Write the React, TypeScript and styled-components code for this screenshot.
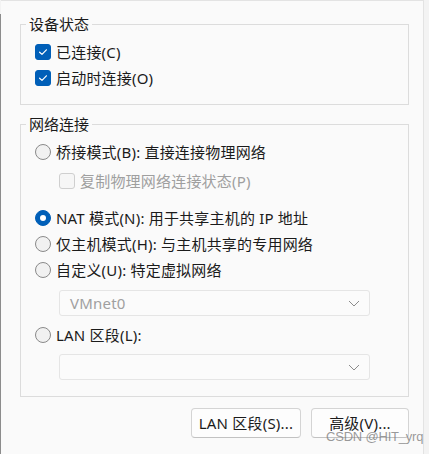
import React from 'react';
import styled, { createGlobalStyle } from 'styled-components';

const GlobalStyle = createGlobalStyle`
  html, body {
    margin: 0;
    padding: 0;
    background: #f3f3f3;
  }
  body {
    font-family: "Noto Sans", "Noto Sans CJK SC", sans-serif;
    font-size: 15px;
    color: #1b1b1b;
  }
`;

const Page = styled.div`
  display: flex;
  width: 429px;
  height: 454px;
  overflow: hidden;
  position: relative;
`;

const LeftRule = styled.div`
  width: 1px;
  margin-top: 14px;
  background: #8c8c8c;
  flex: none;
`;

const Panel = styled.div`
  width: 423px;
  flex: none;
  background: #fafafa;
  border-top: 1px solid #e3e3e3;
  border-right: 1px solid #e3e3e3;
  padding: 13px 14px 0 19px;
  box-sizing: border-box;
  display: flex;
  flex-direction: column;
`;

const Group = styled.fieldset<{ $bottom: number }>`
  margin: 0;
  border: 1px solid #dcdcdc;
  padding: 5px 13px ${({ $bottom }) => $bottom}px 14px;
  display: flex;
  flex-direction: column;
  min-width: 0;
  & + & {
    margin-top: 9px;
  }
`;

const Legend = styled.legend`
  margin-left: -9px;
  padding: 0 3px;
  line-height: 20px;
  font-size: 15px;
  color: #1b1b1b;
`;

const Row = styled.label<{ $top?: number; $indent?: number; $disabled?: boolean }>`
  display: flex;
  align-items: center;
  gap: 5px;
  height: 26px;
  margin-top: ${({ $top }) => $top ?? 0}px;
  margin-left: ${({ $indent }) => $indent ?? 0}px;
  color: ${({ $disabled }) => ($disabled ? '#9f9f9f' : '#1b1b1b')};
  white-space: nowrap;
  line-height: 20px;
  letter-spacing: 0.2px;
`;

const Box = styled.span<{ $checked?: boolean; $disabled?: boolean }>`
  width: 16px;
  height: 16px;
  box-sizing: border-box;
  border-radius: 3px;
  flex: none;
  display: flex;
  align-items: center;
  justify-content: center;
  background: ${({ $checked }) => ($checked ? '#005fb8' : '#f6f6f6')};
  border: 1px solid
    ${({ $checked, $disabled }) => ($checked ? '#005fb8' : $disabled ? '#cfcfcf' : '#8a8a8a')};
`;

const Radio = styled.span<{ $checked?: boolean }>`
  width: 16px;
  height: 16px;
  box-sizing: border-box;
  border-radius: 50%;
  flex: none;
  display: flex;
  align-items: center;
  justify-content: center;
  background: ${({ $checked }) => ($checked ? '#005fb8' : '#f1f1f1')};
  border: 1px solid ${({ $checked }) => ($checked ? '#005fb8' : '#8a8a8a')};

  &::after {
    content: '';
    display: ${({ $checked }) => ($checked ? 'block' : 'none')};
    width: 6px;
    height: 6px;
    border-radius: 50%;
    background: #ffffff;
  }
`;

const Select = styled.div<{ $top: number }>`
  margin-top: ${({ $top }) => $top}px;
  margin-left: 24px;
  width: 311px;
  height: 26px;
  box-sizing: border-box;
  border: 1px solid #e5e5e5;
  border-radius: 3px;
  background: #fbfbfb;
  display: flex;
  align-items: center;
  justify-content: space-between;
  padding: 0 9px 0 10px;
  color: #a0a0a0;
  line-height: 20px;
  letter-spacing: 0.2px;
`;

const Buttons = styled.div`
  display: flex;
  justify-content: flex-end;
  gap: 10px;
  margin-top: 11px;
`;

const Button = styled.button<{ $width: number }>`
  width: ${({ $width }) => $width}px;
  height: 30px;
  box-sizing: border-box;
  background: #fdfdfd;
  border: 1px solid #d4d4d4;
  border-bottom-color: #c2c2c2;
  border-radius: 4px;
  font-family: "Noto Sans", "Noto Sans CJK SC", sans-serif;
  font-size: 15px;
  letter-spacing: 0.2px;
  color: #1b1b1b;
  padding: 0;
  line-height: 20px;
`;

const Watermark = styled.div`
  position: absolute;
  left: 326px;
  top: 429px;
  font-family: "Liberation Sans", Arial, sans-serif;
  font-size: 13px;
  color: rgba(120, 120, 120, 0.75);
  letter-spacing: -0.2px;
  pointer-events: none;
`;

const Check = () => (
  <svg width="10" height="10" viewBox="0 0 10 10">
    <path d="M1.6 5.2 L4 7.4 L8.4 2.8" fill="none" stroke="#ffffff" strokeWidth="1.2" strokeLinecap="round" strokeLinejoin="round" />
  </svg>
);

const Chevron = () => (
  <svg width="12" height="7" viewBox="0 0 12 7">
    <path d="M1 1 L6 6 L11 1" fill="none" stroke="#8c8c8c" strokeWidth="1" />
  </svg>
);

export default function App() {
  return (
    <>
      <GlobalStyle />
      <Page>
        <LeftRule />
        <Panel>
          <Group $bottom={13}>
            <Legend>设备状态</Legend>
            <Row>
              <Box $checked><Check /></Box>
              已连接(C)
            </Row>
            <Row>
              <Box $checked><Check /></Box>
              启动时连接(O)
            </Row>
          </Group>

          <Group $bottom={16}>
            <Legend>网络连接</Legend>
            <Row>
              <Radio />
              桥接模式(B): 直接连接物理网络
            </Row>
            <Row $top={3} $indent={24} $disabled>
              <Box $disabled />
              复制物理网络连接状态(P)
            </Row>
            <Row $top={11}>
              <Radio $checked />
              NAT 模式(N): 用于共享主机的 IP 地址
            </Row>
            <Row>
              <Radio />
              仅主机模式(H): 与主机共享的专用网络
            </Row>
            <Row>
              <Radio />
              自定义(U): 特定虚拟网络
            </Row>
            <Select $top={7}>
              VMnet0
              <Chevron />
            </Select>
            <Row $top={6}>
              <Radio />
              LAN 区段(L):
            </Row>
            <Select $top={6}>
              <span />
              <Chevron />
            </Select>
          </Group>

          <Buttons>
            <Button $width={110}>LAN 区段(S)...</Button>
            <Button $width={98}>高级(V)...</Button>
          </Buttons>
        </Panel>
        <Watermark>CSDN @HIT_yrq</Watermark>
      </Page>
    </>
  );
}
